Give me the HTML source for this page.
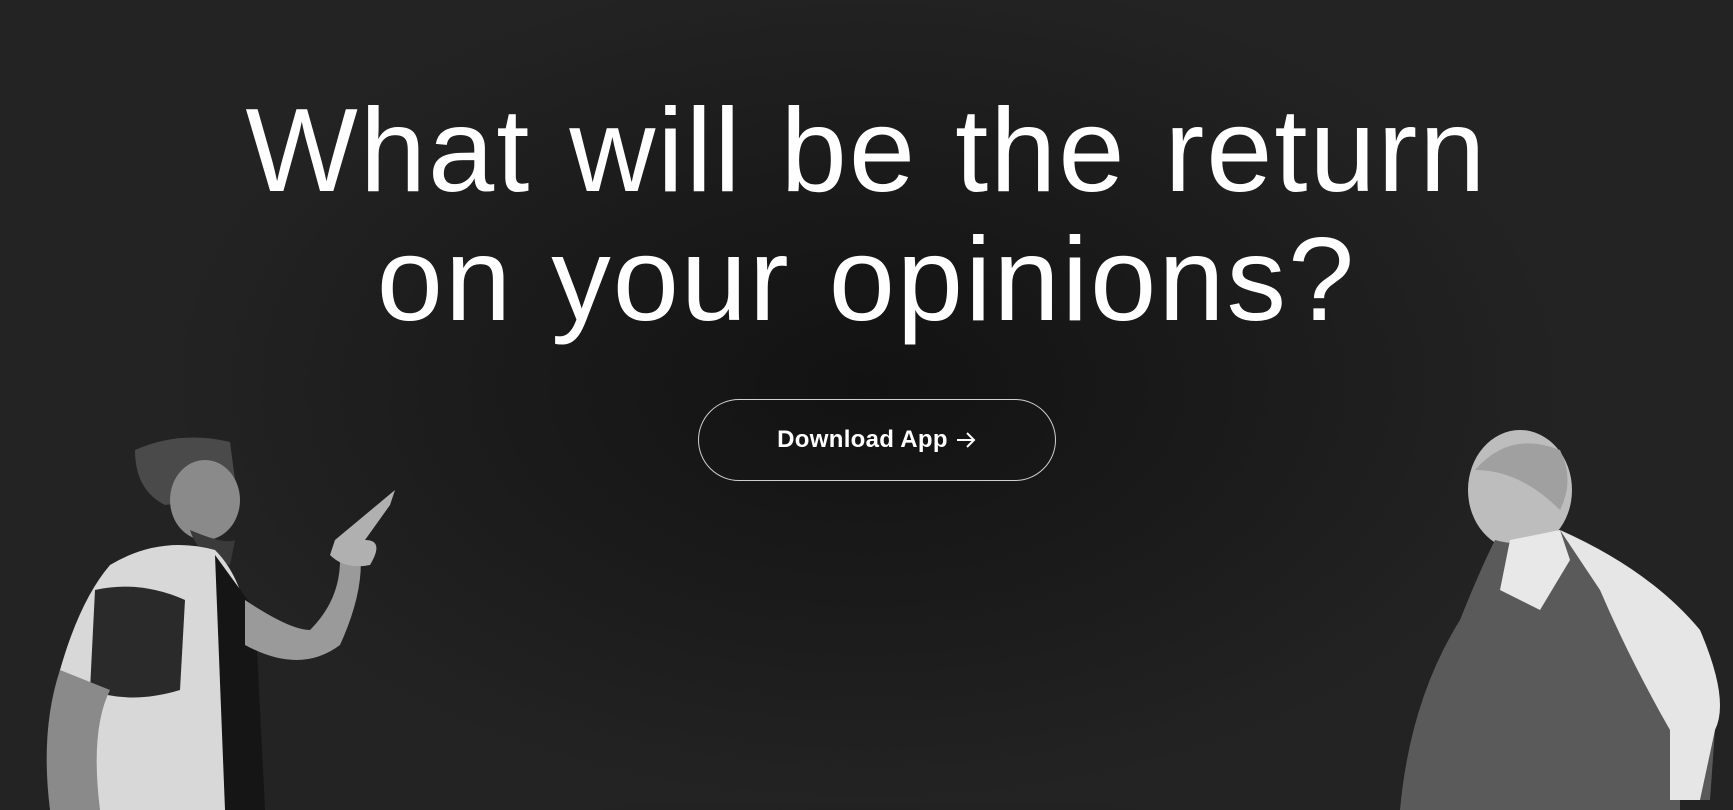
<!DOCTYPE html>
<html><head><meta charset="utf-8"><style>
html,body{margin:0;padding:0}
body{width:1733px;height:803px;overflow:hidden;position:relative;
background:radial-gradient(ellipse 700px 420px at 50% 48%,#121212 0%,#1b1b1b 55%,#232323 100%);
font-family:"Liberation Sans",sans-serif;color:#fff}
h1{position:absolute;left:0;width:1733px;top:86px;margin:0;text-align:center;font-weight:400;font-size:119px;line-height:129px;letter-spacing:2px;word-spacing:3px}
.btn{position:absolute;left:698px;top:399px;width:358px;height:82px;border:1px solid #cfcfcf;border-radius:41px;box-sizing:border-box;display:flex;align-items:center;justify-content:center;font-size:24px;font-weight:700;letter-spacing:.3px}
svg{position:absolute}
</style></head><body>
<h1>What will be the return<br>on your opinions?</h1>
<div class="btn">Download App&nbsp;<svg style="position:static" width="22" height="20" viewBox="0 0 22 20"><path d="M2 10H19M12 3l7 7-7 7" stroke="#fff" stroke-width="2" fill="none"/></svg></div>
<svg width="400" height="380" style="left:40px;top:430px" viewBox="0 0 400 380">
<path d="M95 20 Q140 0 190 12 L195 50 Q170 70 125 75 Q95 60 95 20Z" fill="#4a4a4a"/>
<ellipse cx="165" cy="70" rx="35" ry="40" fill="#8a8a8a"/>
<path d="M150 100 Q185 115 195 110 L190 135 Q160 130 150 100Z" fill="#3a3a3a"/>
<path d="M70 135 Q120 105 175 120 Q215 160 210 250 L220 380 L30 380 Q5 300 20 240 Q40 170 70 135Z" fill="#d8d8d8"/>
<path d="M55 160 Q100 150 145 170 L140 260 Q90 275 50 260Z" fill="#2a2a2a"/>
<path d="M175 125 L215 180 L225 380 L185 380Z" fill="#151515"/>
<path d="M205 170 Q250 200 270 200 Q300 170 300 130 L320 120 Q325 160 300 215 Q260 245 205 215Z" fill="#9a9a9a"/>
<path d="M295 110 L355 60 L350 75 L325 110 Q345 110 330 135 Q305 140 290 125Z" fill="#b0b0b0"/>
<path d="M20 240 Q0 300 10 380 L60 380 Q50 300 70 260Z" fill="#8a8a8a"/>
</svg>
<svg width="340" height="380" style="left:1400px;top:430px" viewBox="0 0 340 380">
<ellipse cx="120" cy="60" rx="52" ry="60" fill="#bdbdbd"/>
<path d="M75 40 Q110 0 160 20 Q175 50 160 80 Q120 40 75 40Z" fill="#a0a0a0"/>
<path d="M95 110 Q130 120 160 100 L200 140 L230 170 Q300 220 315 300 L310 370 L280 370 L280 380 L0 380 Q10 270 60 190 Q80 140 95 110Z" fill="#5a5a5a"/>
<path d="M110 110 L160 100 L170 130 L140 180 L100 160Z" fill="#e8e8e8"/>
<path d="M160 100 Q250 140 300 200 Q330 270 315 300 L300 370 L270 370 L270 300 Q230 230 200 160Z" fill="#e6e6e6"/>
</svg>
</body></html>
